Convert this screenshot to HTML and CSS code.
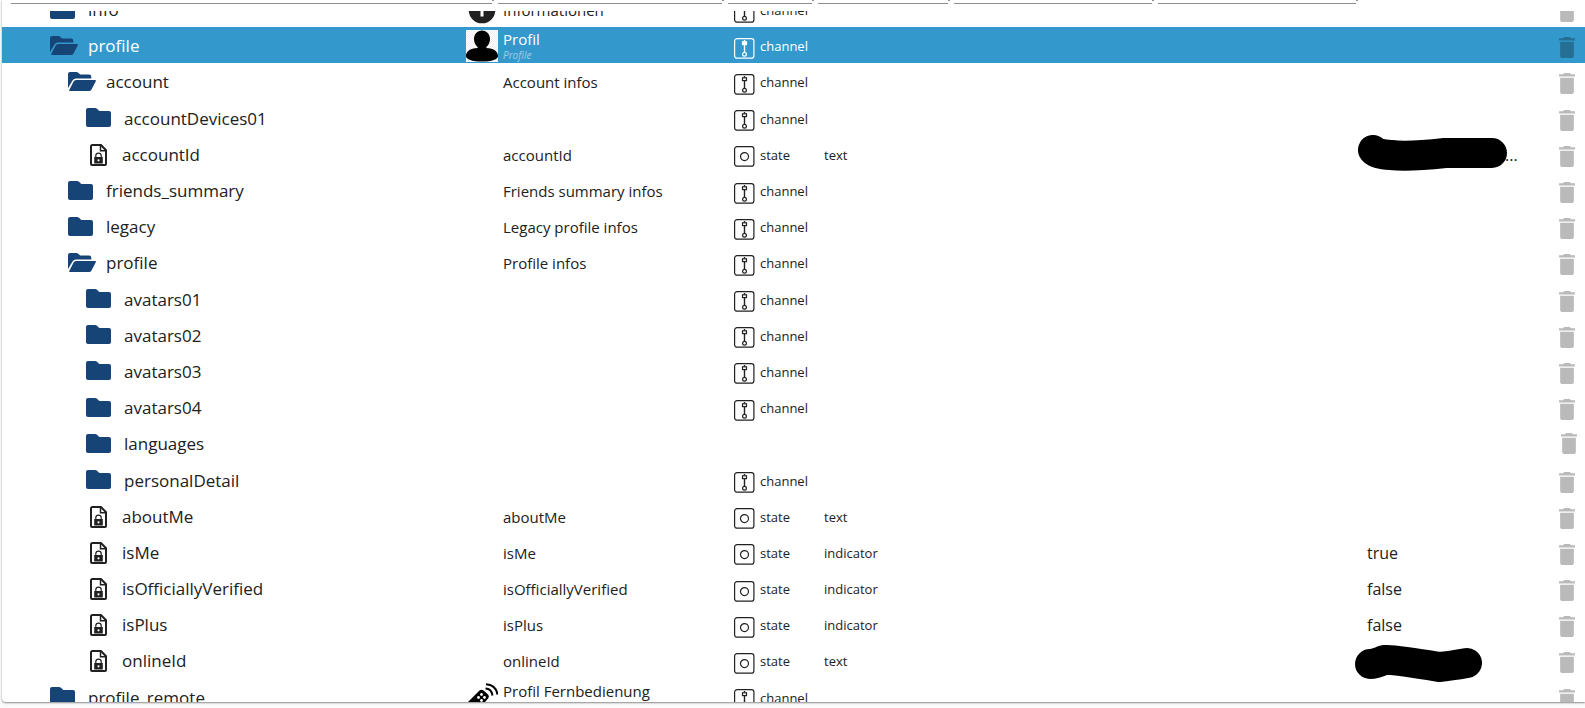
FILE: index.html
```
<!DOCTYPE html>
<html lang="de">
<head>
<meta charset="utf-8">
<title>Objekte</title>
<link rel="stylesheet" href="styles.css">
</head>
<body>
<svg class="sprite" aria-hidden="true">
  <symbol id="folder" viewBox="0 0 25 19"><path d="M2 0h7q1.200 0 2 .8l1.800 1.700q.5.500 1.200.5h9q2 0 2 2v12q0 2-2 2H2q-2 0-2-2V2Q0 0 2 0z"/></symbol>
  <symbol id="open" viewBox="0 0 28 19"><path d="M2 0h6.500q1 0 1.700.7l2 1.800H21q2.300 0 2.300 2.300v1.700H8q-2.300 0-3.500 2L0 16V2Q0 0 2 0z"/><path d="M8 8h19q1.400 0 .8 1.300l-4.300 8.200q-.8 1.500-2.500 1.500H2.200q-1.500 0-.8-1.300l4.200-8.200Q6.400 8 8 8z"/></symbol>
  <symbol id="doc" viewBox="0 0 17 22"><path d="M2.500 1H11l5 5.200V20q0 1-1 1H2q-1 0-1-1V2.500Q1 1 2.500 1z" fill="none" stroke="currentColor" stroke-width="2"/><path d="M10.500 1v5.700H16" fill="none" stroke="currentColor" stroke-width="1.500"/><path fill-rule="evenodd" d="M4.200 13h1V11.800a3.300 3.300 0 0 1 6.600 0V13h1v6.500H4.200zm2.200 0h4.200v-1.200a2.100 2.100 0 0 0-4.200 0zm2.100 2.200a1.100 1.100 0 1 0 0 2.200 1.100 1.100 0 0 0 0-2.200z"/></symbol>
  <symbol id="channel" viewBox="0 0 21 21"><rect x=".6" y=".6" width="19.300" height="19.600" rx="2.500" fill="none" stroke="currentColor" stroke-width="1.200"/><path d="M10.500 2v1.500M10.500 6v8" stroke="currentColor" stroke-width="1.400"/><rect class="knob" x="8.500" y="3.800" width="4" height="2.800" stroke="currentColor" stroke-width="1.200"/><circle cx="10.500" cy="16.300" r="1.900" fill="none" stroke="currentColor" stroke-width="1.200"/></symbol>
  <symbol id="state" viewBox="0 0 21 21"><rect x=".6" y=".6" width="19.300" height="19.600" rx="2.500" fill="none" stroke="currentColor" stroke-width="1.200"/><circle cx="10.500" cy="10.600" r="4" fill="none" stroke="currentColor" stroke-width="1.200"/></symbol>
  <symbol id="trash" viewBox="5 3 14 18" preserveAspectRatio="none"><path d="M6 19c0 1.100.9 2 2 2h8c1.100 0 2-.9 2-2V7H6v12zM19 4h-3.500l-1-1h-5l-1 1H5v2h14V4z"/></symbol>
</svg>
<main class="panel">
  <form class="filters">
    <label><input aria-label="ID"></label><label><input aria-label="Name"></label><label><input aria-label="Typ"></label><label><input aria-label="Rolle"></label><label><input aria-label="Raum"></label><label><input aria-label="Funktion"></label>
  </form>
  <div class="view">
    <table class="tree">
      <colgroup><col class="c-id"><col class="c-name"><col class="c-type"><col class="c-role"><col><col class="c-value"><col class="c-act"></colgroup>
      <tbody>
        <tr><td><div class="node"><svg class="folder"><use href="#folder"/></svg><span>info</span></div></td><td><div class="name"><svg class="pic" viewBox="0 0 32 32"><circle cx="16" cy="16" r="13.300"/><path d="M14.500 14h3v8.500h-3zM14.500 9h3v3h-3z" fill="#fff"/></svg><span>Informationen</span></div></td><td><div class="type"><svg><use href="#channel"/></svg>channel</div></td><td></td><td></td><td></td><td><button aria-label="Löschen"><svg><use href="#trash"/></svg></button></td></tr>
        <tr class="selected"><td><div class="node"><svg class="open"><use href="#open"/></svg><span>profile</span></div></td><td><div class="name"><svg class="pic" viewBox="0 0 32 32"><defs><pattern id="check" width="2" height="2" patternUnits="userSpaceOnUse"><rect width="2" height="2" fill="#fff"/><path d="M0 0h1v1H0zM1 1h1v1H1z" fill="#eee"/></pattern></defs><rect width="32" height="32" fill="url(#check)"/><path d="M16 .5c4.700 0 8 3.700 8 8.500 0 3.500-1.500 6.500-4 8.300.5 1 2 .9 4.500 1.300 4.500.8 7.500 3.900 7.500 7.400 0 3.500-6 5.500-16 5.500S0 29.500 0 26c0-3.500 3-6.600 7.500-7.400 2.500-.4 4-.3 4.500-1.300C9.500 15.500 8 12.500 8 9 8 4.200 11.300.5 16 .5z" fill="#000"/></svg><span class="stack"><span>Profil</span><i>Profile</i></span></div></td><td><div class="type"><svg><use href="#channel"/></svg>channel</div></td><td></td><td></td><td></td><td><button aria-label="Löschen"><svg><use href="#trash"/></svg></button></td></tr>
        <tr><td><div class="node l1"><svg class="open"><use href="#open"/></svg><span>account</span></div></td><td><div class="name text">Account infos</div></td><td><div class="type"><svg><use href="#channel"/></svg>channel</div></td><td></td><td></td><td></td><td><button aria-label="Löschen"><svg><use href="#trash"/></svg></button></td></tr>
        <tr><td><div class="node l2"><svg class="folder"><use href="#folder"/></svg><span>accountDevices01</span></div></td><td></td><td><div class="type"><svg><use href="#channel"/></svg>channel</div></td><td></td><td></td><td></td><td><button aria-label="Löschen"><svg><use href="#trash"/></svg></button></td></tr>
        <tr><td><div class="node l2"><svg class="doc"><use href="#doc"/></svg><span>accountId</span></div></td><td><div class="name text">accountId</div></td><td><div class="type"><svg><use href="#state"/></svg>state</div></td><td>text</td><td></td><td class="value"><div class="hidden-id">...<svg class="stroke wide" viewBox="0 0 149 37"><path d="M15 15Q17 19 33 20Q50 22 87 18H134" fill="none" stroke="#000" stroke-width="30" stroke-linecap="round" stroke-linejoin="round"/></svg></div></td><td><button aria-label="Löschen"><svg><use href="#trash"/></svg></button></td></tr>
        <tr><td><div class="node l1"><svg class="folder"><use href="#folder"/></svg><span>friends_summary</span></div></td><td><div class="name text">Friends summary infos</div></td><td><div class="type"><svg><use href="#channel"/></svg>channel</div></td><td></td><td></td><td></td><td><button aria-label="Löschen"><svg><use href="#trash"/></svg></button></td></tr>
        <tr><td><div class="node l1"><svg class="folder"><use href="#folder"/></svg><span>legacy</span></div></td><td><div class="name text">Legacy profile infos</div></td><td><div class="type"><svg><use href="#channel"/></svg>channel</div></td><td></td><td></td><td></td><td><button aria-label="Löschen"><svg><use href="#trash"/></svg></button></td></tr>
        <tr><td><div class="node l1"><svg class="open"><use href="#open"/></svg><span>profile</span></div></td><td><div class="name text">Profile infos</div></td><td><div class="type"><svg><use href="#channel"/></svg>channel</div></td><td></td><td></td><td></td><td><button aria-label="Löschen"><svg><use href="#trash"/></svg></button></td></tr>
        <tr><td><div class="node l2"><svg class="folder"><use href="#folder"/></svg><span>avatars01</span></div></td><td></td><td><div class="type"><svg><use href="#channel"/></svg>channel</div></td><td></td><td></td><td></td><td><button aria-label="Löschen"><svg><use href="#trash"/></svg></button></td></tr>
        <tr><td><div class="node l2"><svg class="folder"><use href="#folder"/></svg><span>avatars02</span></div></td><td></td><td><div class="type"><svg><use href="#channel"/></svg>channel</div></td><td></td><td></td><td></td><td><button aria-label="Löschen"><svg><use href="#trash"/></svg></button></td></tr>
        <tr><td><div class="node l2"><svg class="folder"><use href="#folder"/></svg><span>avatars03</span></div></td><td></td><td><div class="type"><svg><use href="#channel"/></svg>channel</div></td><td></td><td></td><td></td><td><button aria-label="Löschen"><svg><use href="#trash"/></svg></button></td></tr>
        <tr><td><div class="node l2"><svg class="folder"><use href="#folder"/></svg><span>avatars04</span></div></td><td></td><td><div class="type"><svg><use href="#channel"/></svg>channel</div></td><td></td><td></td><td></td><td><button aria-label="Löschen"><svg><use href="#trash"/></svg></button></td></tr>
        <tr class="virtual"><td><div class="node l2"><svg class="folder"><use href="#folder"/></svg><span>languages</span></div></td><td></td><td></td><td></td><td></td><td></td><td><button aria-label="Löschen"><svg><use href="#trash"/></svg></button></td></tr>
        <tr><td><div class="node l2"><svg class="folder"><use href="#folder"/></svg><span>personalDetail</span></div></td><td></td><td><div class="type"><svg><use href="#channel"/></svg>channel</div></td><td></td><td></td><td></td><td><button aria-label="Löschen"><svg><use href="#trash"/></svg></button></td></tr>
        <tr><td><div class="node l2"><svg class="doc"><use href="#doc"/></svg><span>aboutMe</span></div></td><td><div class="name text">aboutMe</div></td><td><div class="type"><svg><use href="#state"/></svg>state</div></td><td>text</td><td></td><td></td><td><button aria-label="Löschen"><svg><use href="#trash"/></svg></button></td></tr>
        <tr><td><div class="node l2"><svg class="doc"><use href="#doc"/></svg><span>isMe</span></div></td><td><div class="name text">isMe</div></td><td><div class="type"><svg><use href="#state"/></svg>state</div></td><td>indicator</td><td></td><td class="value">true</td><td><button aria-label="Löschen"><svg><use href="#trash"/></svg></button></td></tr>
        <tr><td><div class="node l2"><svg class="doc"><use href="#doc"/></svg><span>isOfficiallyVerified</span></div></td><td><div class="name text">isOfficiallyVerified</div></td><td><div class="type"><svg><use href="#state"/></svg>state</div></td><td>indicator</td><td></td><td class="value">false</td><td><button aria-label="Löschen"><svg><use href="#trash"/></svg></button></td></tr>
        <tr><td><div class="node l2"><svg class="doc"><use href="#doc"/></svg><span>isPlus</span></div></td><td><div class="name text">isPlus</div></td><td><div class="type"><svg><use href="#state"/></svg>state</div></td><td>indicator</td><td></td><td class="value">false</td><td><button aria-label="Löschen"><svg><use href="#trash"/></svg></button></td></tr>
        <tr><td><div class="node l2"><svg class="doc"><use href="#doc"/></svg><span>onlineId</span></div></td><td><div class="name text">onlineId</div></td><td><div class="type"><svg><use href="#state"/></svg>state</div></td><td>text</td><td></td><td class="value"><div class="hidden-id"><svg class="stroke" viewBox="0 0 127 37"><path d="M15 19Q20 19 29 15Q36 14 84 22Q95 21 112 18" fill="none" stroke="#000" stroke-width="30" stroke-linecap="round" stroke-linejoin="round"/></svg></div></td><td><button aria-label="Löschen"><svg><use href="#trash"/></svg></button></td></tr>
        <tr><td><div class="node"><svg class="folder"><use href="#folder"/></svg><span>profile_remote</span></div></td><td><div class="name"><svg class="pic" viewBox="0 0 32 32"><path d="M13.500 8.500q2-1.500 4 0l4.500 4q1.500 2 0 4L11 30l-13-6z" fill="#000"/><g fill="#fff"><circle cx="15.500" cy="12.500" r="1.400"/><circle cx="18.500" cy="15.500" r="1.400"/><circle cx="12.500" cy="15.500" r="1.400"/><circle cx="15.500" cy="18.500" r="1.400"/></g><path d="M19.500 6.500q6 0 7 7M20 2.200q10 .8 11.500 10.300" fill="none" stroke="#000" stroke-width="2"/></svg><span class="stack"><span>Profil Fernbedienung</span></span></div></td><td><div class="type"><svg><use href="#channel"/></svg>channel</div></td><td></td><td></td><td></td><td><button aria-label="Löschen"><svg><use href="#trash"/></svg></button></td></tr>
      </tbody>
    </table>
  </div>
</main>
</body>
</html>
```
FILE: styles.css
```
* { box-sizing: border-box; }
html, body { height: 100%; }
body {
  margin: 0;
  padding: 0 0 6px 2px;
  overflow: hidden;
  background: #fbfbfb;
  color: #212121;
  font-family: "Open Sans", "Noto Sans", sans-serif;
  font-size: 13px;
}
.sprite { display: none; }
svg { flex: none; fill: currentColor; }
.panel {
  display: flex;
  flex-direction: column;
  height: 100%;
  background: #fff;
  border-radius: 0 0 0 4px;
  box-shadow: 0 1px 2px rgba(0, 0, 0, .45);
  overflow: hidden;
}
.filters {
  display: grid;
  grid-template-columns: 481px 224px 84px 130px 1fr 1fr;
  column-gap: 6px;
  height: 4px;
  margin-bottom: 7px;
  padding: 0 229px 0 9px;
}
.filters label { position: relative; display: flex; }
.filters label::after {
  content: "";
  position: absolute;
  right: -2px;
  top: 0;
  width: 2px;
  height: 1px;
  background: #8e8e8e;
}
.filters input {
  width: 100%;
  height: 4px;
  padding: 0;
  border: 0;
  border-bottom: 1px solid #8e8e8e;
  outline: 0;
  background: none;
}
.view { flex: 1; min-height: 0; overflow: hidden; }
.tree {
  width: 100%;
  height: calc(100% + 33px);
  margin-top: -20px;
  border-collapse: collapse;
  table-layout: fixed;
}
.c-id { width: 464px; }
.c-name { width: 268px; }
.c-type { width: 90px; }
.c-role { width: 130px; }
.c-value { width: 180px; }
.c-act { width: 38px; }
tr { height: 5%; --knob: #fff; }
td { padding: 2px 0 0; white-space: nowrap; line-height: 18px; }
.selected { background: #3399cc; color: #fff; --knob: #fff; }
.node {
  display: flex;
  align-items: center;
  padding-left: 48px;
  color: #212121;
  font-size: 17px;
  line-height: 24px;
}
.l1 { padding-left: 66px; }
.l2 { padding-left: 84px; }
.node svg { color: #164477; height: 19px; margin-right: 13px; margin-bottom: 2px; }
.node .folder { width: 25px; }
.node .open { width: 28px; margin-right: 10px; }
.node .doc { width: 17px; height: 22px; margin: 0 15px 0 4px; color: #212121; }
.selected .node { color: #fff; }
.name {
  display: flex;
  align-items: center;
  gap: 5px;
  font-size: 15px;
  line-height: 20px;
}
.name.text { padding-left: 37px; }
.pic { width: 32px; height: 32px; }
.stack { display: flex; flex-direction: column; min-height: 32px; line-height: 18px; }
.stack i { font-size: 10px; line-height: 14px; opacity: .5; }
.type { display: flex; align-items: center; gap: 5px; }
.type svg { width: 21px; height: 21px; margin-top: 4px; }
.knob { fill: var(--knob); }
.value { font-size: 16px; }
.hidden-id { position: relative; height: 24px; padding-left: 138px; line-height: 24px; }
.stroke { position: absolute; left: -12px; top: -4px; width: 127px; height: 37px; }
.stroke.wide { left: -9px; top: -8px; width: 149px; }
button {
  display: flex;
  margin: 3px 0 0 12px;
  padding: 0;
  border: 0;
  background: none;
  color: rgba(0, 0, 0, .27);
}
button svg { width: 16px; height: 21px; }
.virtual td:last-child { padding: 0; }
.virtual button { margin: 0 0 0 14px; }
```
